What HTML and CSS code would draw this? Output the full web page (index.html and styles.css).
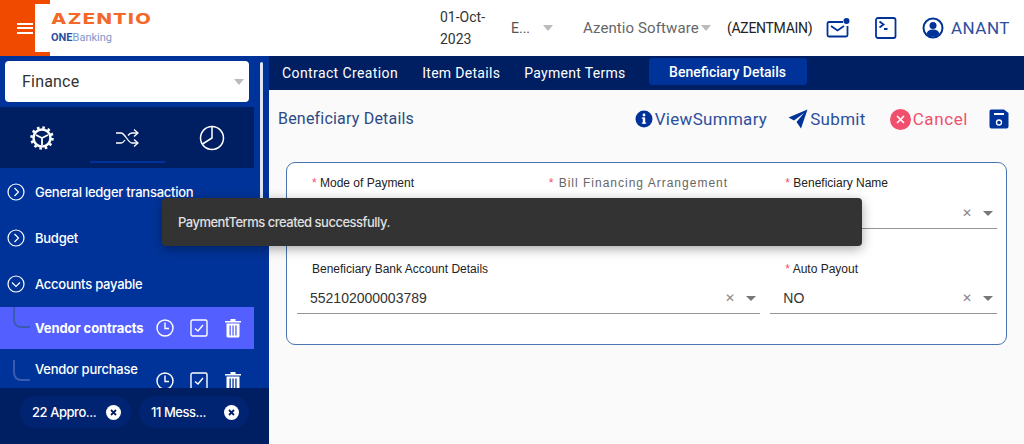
FILE: index.html
```html
<!DOCTYPE html>
<html lang="en">
<head>
    <meta charset="UTF-8">
    <meta name="viewport" content="width=device-width, initial-scale=1.0">
    <title>Beneficiary Details</title>
    <link rel="stylesheet" href="styles.css">
</head>
<body>
    <header class="topbar">
        <div class="brand">
            <button class="burger"><span></span><span></span><span></span></button>
            <div class="logo">
                <div class="logo-name">AZENTIO</div>
                <div class="logo-sub"><b>ONE</b>Banking</div>
            </div>
        </div>
        <div class="top-date">01-Oct-<br>2023</div>
        <div class="top-lang">E...<i class="caret caret-light"></i></div>
        <div class="top-company">Azentio Software<i class="caret caret-light"></i></div>
        <div class="top-code">(AZENTMAIN)</div>
        <svg class="top-mail" width="24" height="22" viewBox="0 0 24 22" fill="none" stroke="#003399" stroke-width="1.800">
            <path d="M17 5H3a1.500 1.500 0 0 0-1.500 1.500V18A1.500 1.500 0 0 0 3 19.500h17a1.500 1.500 0 0 0 1.500-1.500V9"/>
            <path d="M5 9l6.500 4.500L18 9"/>
            <circle cx="20.500" cy="4" r="3" fill="#003399" stroke="none"/>
        </svg>
        <svg class="top-term" width="22" height="22" viewBox="0 0 22 22" fill="none" stroke="#003399" stroke-width="1.800">
            <rect x="1" y="1" width="19.500" height="20" rx="2"/>
            <path d="M4.500 4.500l4 3-4 3M9 12h3.500"/>
        </svg>
        <svg class="top-user" width="22" height="22" viewBox="0 0 22 22">
            <circle cx="11" cy="11" r="9.500" fill="none" stroke="#003399" stroke-width="2"/>
            <circle cx="11" cy="8.500" r="3.500" fill="#003399"/>
            <path d="M4.500 17c1-3.500 3.500-4.500 6.500-4.500s5.500 1 6.500 4.500a9 9 0 0 1-13 0z" fill="#003399"/>
        </svg>
        <div class="top-name">ANANT</div>
    </header>

    <div class="layout">
        <aside class="sidebar">
            <div class="sidebar-scroll"></div>
            <div class="module-wrap">
                <div class="module-select">Finance<i class="caret caret-light"></i></div>
            </div>
            <div class="side-tabs">
                <div class="side-tab">
                    <svg width="24" height="24" viewBox="0 0 24 24" fill="none" stroke="#fff">
                        <circle cx="12" cy="12" r="8.500" stroke-width="2.500"/>
                        <circle cx="12" cy="12" r="10.500" stroke-width="2.500" stroke-dasharray="2.600 2.900"/>
                        <path d="M12 12L6 9M12 12l6-3M12 12v7" stroke-width="1.800"/>
                    </svg>
                </div>
                <div class="side-tab side-tab-active">
                    <svg width="24" height="20" viewBox="0 0 24 20" fill="none" stroke="#fff" stroke-width="1.300">
                        <path d="M1 5h5c4 0 7 10 11 10h5M1 15h5c1.500 0 3-1.500 4-3M13 7.500c1-1.300 2.500-2.500 4-2.500h5"/>
                        <path d="M19 1.500L23 5l-4 3.500M19 11.500l4 3.500-4 3.500"/>
                    </svg>
                </div>
                <div class="side-tab">
                    <svg width="26" height="26" viewBox="0 0 26 26" fill="none" stroke="#fff" stroke-width="1.500">
                        <circle cx="13" cy="13" r="11.500"/>
                        <path d="M13 1.500V13l-9.500 6"/>
                    </svg>
                </div>
            </div>
            <nav class="menu">
                <div class="menu-group">
                    <svg class="menu-chev" width="18" height="18" viewBox="0 0 18 18" fill="none" stroke="#fff" stroke-width="1.200"><circle cx="9" cy="9" r="8"/><path d="M7.500 5l4 4-4 4"/></svg>
                    <span>General ledger transaction</span>
                </div>
                <div class="menu-group">
                    <svg class="menu-chev" width="18" height="18" viewBox="0 0 18 18" fill="none" stroke="#fff" stroke-width="1.200"><circle cx="9" cy="9" r="8"/><path d="M7.500 5l4 4-4 4"/></svg>
                    <span>Budget</span>
                </div>
                <div class="menu-group">
                    <svg class="menu-chev" width="18" height="18" viewBox="0 0 18 18" fill="none" stroke="#fff" stroke-width="1.200"><circle cx="9" cy="9" r="8"/><path d="M5 7.500l4 4 4-4"/></svg>
                    <span>Accounts payable</span>
                </div>
                <div class="menu-item menu-item-active">
                    <i class="menu-branch"></i>
                    <span class="menu-label">Vendor contracts</span>
                    <svg class="act" width="18" height="18" viewBox="0 0 18 18" fill="none" stroke="#fff" stroke-width="1.400"><circle cx="9" cy="9" r="8"/><path d="M9 3.500V9.500h4"/></svg>
                    <svg class="act" width="18" height="18" viewBox="0 0 18 18" fill="none" stroke="#fff" stroke-width="1.400"><rect x="1" y="1" width="16" height="16" rx="1.500"/><path d="M5 9.500l3 2.500 5-6"/></svg>
                    <svg class="act" width="18" height="20" viewBox="0 0 18 20" fill="#fff"><path d="M1 3h16v1.500H1zM6.500 1h5v2h-5z"/><path d="M2.500 5.500h13V18a1.500 1.500 0 0 1-1.500 1.500H4A1.500 1.500 0 0 1 2.500 18zM5.500 7.500v10h1.300v-10zM8.400 7.500v10h1.300v-10zM11.300 7.500v10h1.300v-10z" fill-rule="evenodd"/></svg>
                </div>
                <div class="menu-item menu-item-tall">
                    <i class="menu-branch"></i>
                    <span class="menu-label">Vendor purchase orders</span>
                    <svg class="act" width="18" height="18" viewBox="0 0 18 18" fill="none" stroke="#fff" stroke-width="1.400"><circle cx="9" cy="9" r="8"/><path d="M9 3.500V9.500h4"/></svg>
                    <svg class="act" width="18" height="18" viewBox="0 0 18 18" fill="none" stroke="#fff" stroke-width="1.400"><rect x="1" y="1" width="16" height="16" rx="1.500"/><path d="M5 9.500l3 2.500 5-6"/></svg>
                    <svg class="act" width="18" height="20" viewBox="0 0 18 20" fill="#fff"><path d="M1 3h16v1.500H1zM6.500 1h5v2h-5z"/><path d="M2.500 5.500h13V18a1.500 1.500 0 0 1-1.500 1.500H4A1.500 1.500 0 0 1 2.500 18zM5.500 7.500v10h1.300v-10zM8.400 7.500v10h1.300v-10zM11.300 7.500v10h1.300v-10z" fill-rule="evenodd"/></svg>
                </div>
            </nav>
            <div class="side-footer">
                <div class="pill">22 Appro...<svg width="15" height="15" viewBox="0 0 15 15"><circle cx="7.500" cy="7.500" r="7.500" fill="#fff"/><path d="M5 5l5 5M10 5l-5 5" stroke="#001f63" stroke-width="1.800"/></svg></div>
                <div class="pill">11 Mess...<svg width="15" height="15" viewBox="0 0 15 15"><circle cx="7.500" cy="7.500" r="7.500" fill="#fff"/><path d="M5 5l5 5M10 5l-5 5" stroke="#001f63" stroke-width="1.800"/></svg></div>
            </div>
        </aside>

        <main class="content">
            <div class="tabs">
                <div class="tab">Contract Creation</div>
                <div class="tab">Item Details</div>
                <div class="tab">Payment Terms</div>
                <div class="tab tab-active">Beneficiary Details</div>
            </div>
            <div class="page-head">
                <h1 class="page-title">Beneficiary Details</h1>
                <div class="actions">
                    <div class="action">
                        <svg width="18" height="18" viewBox="0 0 18 18"><circle cx="9" cy="9" r="8.500" fill="#003399"/><rect x="7.800" y="7.500" width="2.400" height="6" fill="#fff"/><rect x="6.800" y="7.500" width="2" height="1.200" fill="#fff"/><rect x="6.800" y="12.500" width="4.400" height="1.200" fill="#fff"/><circle cx="9" cy="5" r="1.400" fill="#fff"/></svg>
                        <span>ViewSummary</span>
                    </div>
                    <div class="action action-submit">
                        <svg width="20" height="20" viewBox="0 0 20 20" fill="#003399"><path d="M19.500 0.500L0.500 8.500 6 11.500 16 4 8.500 13 13 19.500z"/></svg>
                        <span>Submit</span>
                    </div>
                    <div class="action action-cancel">
                        <svg width="21" height="21" viewBox="0 0 21 21"><circle cx="10.500" cy="10.500" r="10.500" fill="#f0506e"/><path d="M7 7l7 7M14 7l-7 7" stroke="#fff" stroke-width="1.600"/></svg>
                        <span>Cancel</span>
                    </div>
                    <svg class="action-save" width="20" height="20" viewBox="0 0 20 20"><path d="M3 0.500h12L19.500 4v13.500a2 2 0 0 1-2 2h-15a2 2 0 0 1-2-2v-15a2 2 0 0 1 2.500-2z" fill="#003399"/><rect x="5" y="4" width="10" height="2" fill="#fff"/><circle cx="10" cy="13.500" r="2.500" fill="none" stroke="#fff" stroke-width="1.300"/></svg>
                </div>
            </div>
            <form class="form-card">
                <div class="field">
                    <label class="field-label"><em>*</em> Mode of Payment</label>
                    <div class="field-input"></div>
                </div>
                <div class="field">
                    <label class="field-label field-label-muted"><em>*</em> Bill Financing Arrangement</label>
                    <div class="field-input"></div>
                </div>
                <div class="field">
                    <label class="field-label"><em>*</em> Beneficiary Name</label>
                    <div class="field-input">
                        <span class="field-value">ANANT J 1</span>
                        <span class="clear">&#10005;</span><i class="caret"></i>
                    </div>
                </div>
                <div class="field field-low field-wide">
                    <label class="field-label">Beneficiary Bank Account Details</label>
                    <div class="field-input">
                        <span class="field-value">552102000003789</span>
                        <span class="clear">&#10005;</span><i class="caret"></i>
                    </div>
                </div>
                <div class="field field-low">
                    <label class="field-label"><em>*</em> Auto Payout</label>
                    <div class="field-input">
                        <span class="field-value">NO</span>
                        <span class="clear">&#10005;</span><i class="caret"></i>
                    </div>
                </div>
            </form>
        </main>
    </div>

    <div class="toast">PaymentTerms created successfully.</div>
</body>
</html>
```

FILE: styles.css
```css
* {
    box-sizing: border-box;
}
html, body {
    height: 100%;
}
body {
    margin: 0;
    overflow: hidden;
    font-family: Roboto, Arial, sans-serif;
    background-color: #fff;
}
.caret {
    display: inline-block;
    width: 0;
    height: 0;
    border-left: 5px solid transparent;
    border-right: 5px solid transparent;
    border-top: 5px solid #777;
}
.caret-light {
    border-left-width: 5.5px;
    border-right-width: 5.5px;
    border-top-width: 6px;
    border-top-color: #bbb;
}

/* top bar */
.topbar {
    height: 56px;
    display: flex;
    align-items: center;
    background: #fff;
}
.brand {
    width: 50px;
    height: 56px;
    background: #f04a00;
    position: relative;
    flex-shrink: 0;
}
.burger {
    width: 35px;
    height: 56px;
    padding: 0 0 0 17px;
    border: none;
    background: none;
    display: flex;
    flex-direction: column;
    justify-content: center;
    gap: 2.5px;
}
.burger span {
    display: block;
    width: 16px;
    height: 2px;
    background: #fff;
}
.logo {
    position: absolute;
    left: 35px;
    top: 4px;
    width: 120px;
    height: 48px;
    background: #fff;
    padding: 7px 0 0 16px;
}
.logo-name {
    font-family: "Inter", sans-serif;
    font-weight: 800;
    font-size: 15px;
    line-height: 16px;
    letter-spacing: 1px;
    color: #f2692a;
    transform: scaleX(1.34);
    transform-origin: left center;
}
.logo-sub {
    font-size: 11px;
    line-height: 15px;
    margin-top: 3px;
    color: #7e95c9;
}
.logo-sub b {
    color: #2d4f9e;
}
.top-date {
    margin-left: 390px;
    width: 71px;
    font-size: 14px;
    line-height: 22px;
    color: #333;
}
.top-lang {
    width: 72px;
    font-size: 14px;
    color: #555;
    display: flex;
    align-items: center;
    gap: 13px;
}
.top-company {
    width: 144px;
    font-size: 15px;
    letter-spacing: 0.1px;
    color: #666;
    display: flex;
    align-items: center;
    gap: 2px;
}
.top-code {
    width: 99px;
    font-size: 14px;
    letter-spacing: -0.3px;
    color: #222;
}
.top-mail {
    margin-right: 25px;
}
.top-term {
    margin-right: 25px;
}
.top-user {
    margin-right: 7px;
}
.top-name {
    font-size: 17px;
    letter-spacing: 0.5px;
    color: #2d4f9e;
}

/* sidebar */
.layout {
    display: flex;
    height: 388px;
}
.sidebar {
    width: 269px;
    flex-shrink: 0;
    position: relative;
    display: flex;
    flex-direction: column;
    background: #003399;
    font-family: Inter, sans-serif;
}
.sidebar-scroll {
    position: absolute;
    left: 260px;
    top: 6px;
    width: 3px;
    height: 145px;
    border-radius: 2px;
    background: #dfe5f2;
}
.module-wrap {
    padding: 5px 20px 5px 5px;
}
.module-select {
    height: 41px;
    display: flex;
    align-items: center;
    justify-content: space-between;
    padding: 0 5px 0 17px;
    background: #fff;
    border-radius: 4px;
    font-family: Roboto, sans-serif;
    font-size: 16px;
    letter-spacing: 0.2px;
    color: #333;
}
.side-tabs {
    width: 254px;
    height: 61px;
    display: flex;
    background: #001f63;
}
.side-tab {
    flex: 1;
    display: flex;
    align-items: center;
    justify-content: center;
    position: relative;
}
.side-tab-active::after {
    content: "";
    position: absolute;
    left: 5px;
    right: 4px;
    bottom: 5px;
    height: 2px;
    background: #003399;
}
.menu {
    height: 220px;
    overflow: hidden;
    padding-top: 1px;
}
.menu-group {
    height: 46px;
    display: flex;
    align-items: center;
    padding-left: 7px;
    gap: 10px;
    font-size: 13px;
    font-weight: 500;
    letter-spacing: -0.25px;
    color: #fff;
}
.menu-item {
    position: relative;
    width: 254px;
    min-height: 42px;
    display: flex;
    align-items: center;
    padding-left: 35px;
    color: #fff;
    font-size: 13px;
    font-weight: 500;
    letter-spacing: -0.25px;
    line-height: 24px;
}
.menu-item-active {
    background: #5360ff;
    font-weight: 700;
    letter-spacing: -0.1px;
}
.menu-item-tall {
    margin-top: 8px;
}
.menu-branch {
    position: absolute;
    left: 13px;
    top: 0;
    width: 17px;
    height: 21px;
    border-left: 2px solid #3a5cb0;
    border-bottom: 2px solid #3a5cb0;
    border-bottom-left-radius: 8px;
}
.menu-item-tall .menu-branch {
    top: 3px;
}
.menu-label {
    width: 121px;
    flex-shrink: 0;
}
.act {
    margin-right: 16px;
    flex-shrink: 0;
}
.act:last-child {
    margin-right: 0;
}
.side-footer {
    position: absolute;
    left: 0;
    right: 0;
    top: 332px;
    height: 56px;
    display: flex;
    gap: 8px;
    padding: 8px 0 0 20px;
    background: #001f63;
}
.pill {
    height: 32px;
    display: flex;
    align-items: center;
    justify-content: space-between;
    padding: 0 10px 0 12px;
    border-radius: 16px;
    background: #002472;
    color: #fff;
    font-size: 13px;
    font-weight: 500;
    letter-spacing: -0.45px;
}
.pill:first-child {
    width: 111px;
}
.pill:last-child {
    width: 110px;
}

/* main area */
.content {
    flex: 1;
    background: #fafafa;
    min-width: 0;
}
.tabs {
    height: 34px;
    display: flex;
    align-items: center;
    padding-left: 1px;
    background: #001f63;
}
.tab {
    padding: 0 12px;
    font-size: 14px;
    letter-spacing: 0.3px;
    color: #fff;
    white-space: nowrap;
}
.tab:first-child {
    letter-spacing: 0.4px;
}
.tab-active {
    height: 27px;
    margin: 0 0 3px 11px;
    width: 158px;
    padding: 0;
    line-height: 28px;
    text-align: center;
    background: #003399;
    border-radius: 3px;
    font-weight: 500;
    letter-spacing: 0;
}
.page-head {
    height: 72px;
    display: flex;
    align-items: flex-start;
    justify-content: space-between;
    padding: 18px 15px 0 9px;
}
.page-title {
    margin: 0;
    font-size: 16px;
    font-weight: 400;
    letter-spacing: 0.2px;
    line-height: 21px;
    color: #2b4a84;
}
.actions {
    display: flex;
    align-items: center;
    height: 22px;
}
.action {
    display: flex;
    align-items: center;
    gap: 2px;
    margin-right: 21px;
    font-size: 17px;
    letter-spacing: 0.3px;
    color: #2d4f9e;
}
.action-submit {
    margin-right: 24px;
}
.action-cancel {
    letter-spacing: 0.6px;
    color: #f0506e;
}
.form-card {
    margin: 0 17px;
    height: 183px;
    padding: 12px 9px 0 10px;
    display: grid;
    grid-template-columns: repeat(3, 1fr);
    grid-auto-rows: 86px;
    column-gap: 10px;
    background: #fff;
    border: 1px solid #4a76b0;
    border-radius: 9px;
}
.field-wide {
    grid-column: span 2;
}
.field-label {
    display: block;
    padding-left: 15px;
    height: 16px;
    font-family: "Liberation Sans", Arial, sans-serif;
    font-size: 12px;
    line-height: 16px;
    color: #222;
}
.field-label em {
    font-style: normal;
    color: #f0506e;
}
.field-label-muted {
    letter-spacing: 1px;
    color: #666;
}
.field-input {
    height: 36px;
    margin-top: 2px;
    display: flex;
    align-items: center;
    justify-content: flex-end;
    padding: 5px 4px 0 13px;
    border-bottom: 1px solid #949494;
}
.field-low .field-input {
    margin-top: 1px;
}
.field-value {
    flex: 1;
    font-family: "Liberation Sans", Arial, sans-serif;
    font-size: 14px;
    color: #333;
}
.clear {
    margin-right: 11px;
    font-size: 12px;
    color: #888;
}

/* toast */
.toast {
    position: absolute;
    left: 162px;
    top: 198px;
    width: 700px;
    height: 48px;
    padding: 0 16px;
    display: flex;
    align-items: center;
    background: #333;
    border-radius: 4px;
    box-shadow: 0 3px 12px rgba(0, 0, 0, 0.35);
    font-family: Inter, sans-serif;
    font-size: 13px;
    font-weight: 500;
    letter-spacing: -0.5px;
    color: #e0e0e0;
}
```
